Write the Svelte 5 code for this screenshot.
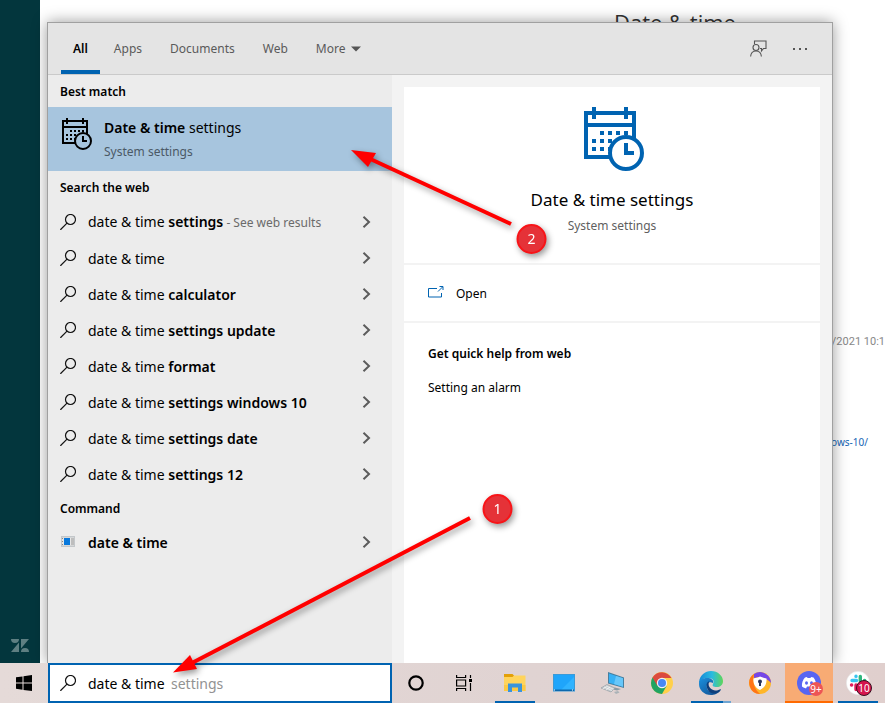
<script>
  const tabs = ['All', 'Apps', 'Documents', 'Web'];
  const results = [
    { bold: 'settings', note: '- See web results' },
    { bold: '' },
    { bold: 'calculator' },
    { bold: 'settings update' },
    { bold: 'format' },
    { bold: 'settings windows 10' },
    { bold: 'settings date' },
    { bold: 'settings 12' }
  ];
  let query = $state('date & time');
</script>

{#snippet calendar(width, height)}
  <svg class="calendar" {width} {height} viewBox="0 0 60 64" fill="none" stroke="currentColor" aria-hidden="true">
    <path d="M2 6H50V50H2ZM2 18H50M10 0V12M42 0V12" stroke-width="4" />
    <path d="M16 26h28M8 34h28M8 42h20" stroke-width="4" stroke-dasharray="4 4" />
    <circle class="face" cx="42" cy="46" r="16" stroke-width="4" />
    <path d="M42 36V46H50" stroke-width="4" />
  </svg>
{/snippet}

{#snippet magnifier()}
  <svg class="lead" width="16" height="16" viewBox="0 0 16 16" fill="none" stroke="#111" stroke-width="1.2" aria-hidden="true">
    <circle cx="10.5" cy="5.5" r="5" /><path d="M7 9.2.4 15.8" />
  </svg>
{/snippet}

{#snippet chevron()}
  <svg class="chevron" width="9" height="12" viewBox="0 0 9 12" fill="none" stroke="#5c5c5c" stroke-width="2" aria-hidden="true">
    <path d="M1.5.8 7 6 1.5 11.2" />
  </svg>
{/snippet}

<div class="screen">
  <div class="desktop">
    <aside>
      <svg width="18" height="13" viewBox="0 0 18 13" fill="#5e7f82" aria-label="Zendesk">
        <path d="M0 0h8a4 4 0 0 1-8 0zM8 3.5V13H0zM10 0h8l-8 9.5zM10 13a4 4 0 0 1 8 0z" />
      </svg>
    </aside>
    <main>
      <h1>Date &amp; time</h1>
      <div class="behind">
        <span>2/2021 10:1</span>
        <a href="#article">ows-10/</a>
      </div>
    </main>

    <section class="panel" aria-label="Search">
      <header>
        <nav>
          {#each tabs as tab, i}
            <button class:active={i === 0}>{tab}</button>
          {/each}
          <button class="more">More
            <svg width="10" height="6" viewBox="0 0 10 6" aria-hidden="true"><path d="M0 .5h10L5 5.5z" fill="#555" /></svg>
          </button>
        </nav>
        <div class="tools">
          <button aria-label="Feedback">
            <svg width="17" height="17" viewBox="0 0 17 17" fill="none" stroke="#555" stroke-width="1.1" aria-hidden="true">
              <path d="M4.5 4V1H16v7.5h-2.5L11.5 11V8.5H10" />
              <circle cx="6" cy="7.5" r="3" />
              <path d="M.6 16.5c.3-3.500 2.500-5.500 5.400-5.500s5.100 2 5.400 5.500" />
            </svg>
          </button>
          <button aria-label="Options">
            <svg width="14" height="2" viewBox="0 0 14 2" fill="#555" aria-hidden="true"><path d="M0 0h2v2H0zM6 0h2v2H6zM12 0h2v2h-2z" /></svg>
          </button>
        </div>
      </header>

      <div class="body">
        <div class="list">
          <h2>Best match</h2>
          <button class="best">
            {@render calendar(30, 32)}
            <span class="names">
              <span class="title"><b>Date &amp; time</b> settings</span>
              <span class="sub">System settings</span>
            </span>
          </button>
          <h2>Search the web</h2>
          {#each results as r}
            <button class="row" class:tall={r.note}>
              {@render magnifier()}
              <span>date &amp; time <b>{r.bold}</b>{#if r.note}<small>{' ' + r.note}</small>{/if}</span>
              {@render chevron()}
            </button>
          {/each}
          <h2>Command</h2>
          <button class="row">
            <svg class="lead" width="16" height="16" viewBox="0 0 16 16" aria-hidden="true">
              <path d="M1 2h14v11H1z" fill="#c3c7ca" /><path d="M2 3.500h12v8H2z" fill="#e6e6e6" />
              <path d="M2 4h1v1H2zM2 7h1v1H2zM2 10h1v1H2z" fill="#888" />
              <path d="M4 4h6v7H4z" fill="#0878dc" /><path d="M11 4h3v7h-3z" fill="#bdbdbd" />
            </svg>
            <span><b>date &amp; time</b></span>
            {@render chevron()}
          </button>
        </div>

        <div class="detail">
          <div class="hero">
            {@render calendar(60, 64)}
            <h3>Date &amp; time settings</h3>
            <p>System settings</p>
          </div>
          <div class="action">
            <button>
              <svg width="16" height="16" viewBox="0 0 16 16" fill="none" stroke="#0063b1" aria-hidden="true">
                <path d="M9 2.500H.5v8.500h13V7M10 5.500 14.500 1M11.500.5H15v3.500" />
              </svg>
              Open
            </button>
          </div>
          <div class="help">
            <h4>Get quick help from web</h4>
            <a href="#alarm">Setting an alarm</a>
          </div>
        </div>
      </div>
    </section>
  </div>

  <footer>
    <button class="start" aria-label="Start">
      <svg width="16" height="16" viewBox="0 0 16 16" aria-hidden="true"><path d="M0 2.300 6.500 1.400V7.600H0zM7.500 1.200 16 0V7.600H7.500zM0 8.500H6.500V14.700L0 13.800zM7.500 8.500H16V16L7.500 14.900z" /></svg>
    </button>
    <label class="search">
      {@render magnifier()}
      <input aria-label="Type here to search" bind:value={query} />
      <span>settings</span>
    </label>
    <button class="app" aria-label="Cortana">
      <svg width="18" height="18" viewBox="0 0 18 18"><circle cx="9" cy="9" r="6.700" fill="none" stroke="#000" stroke-width="2.200" /></svg>
    </button>
    <button class="app" aria-label="Task view">
      <svg width="18" height="16" viewBox="0 0 18 16" fill="none" stroke="#000" stroke-width="1.200">
        <path d="M1.600 0v2.500h9V0M1.600 5h9v6h-9zM1.600 16v-2.500h9V16M15.500 0v3M15.500 8v8" /><path d="M14 4h3v3h-3z" fill="#000" stroke="none" />
      </svg>
    </button>
    <div class="pinned">
      <button class="app open" aria-label="File Explorer">
        <svg width="22" height="20" viewBox="0 0 22 20">
          <path d="M0 2.500h21.500V18H0z" fill="#ffd45c" /><path d="M0 1h8.500l1.500 1.500L8.500 4H0z" fill="#e3a008" />
          <path d="M0 12h21.500v6H0z" fill="#fcc944" /><path d="M4 10.500h14V19h-4v-4.500H8V19H4z" fill="#3a94dd" />
        </svg>
      </button>
      <button class="app" aria-label="Desktop">
        <svg width="22" height="18" viewBox="0 0 22 18"><rect x=".5" y=".5" width="21" height="16.500" fill="#1fa5fb" stroke="#3a9ad8" /><path d="M8 16 21 3V16z" fill="#30b3ff" /><path d="M1 15.500h20v1.500H1z" fill="#0c68ad" /><path d="M1 16h1M19 16h1" stroke="#fff" /></svg>
      </button>
      <button class="app" aria-label="This PC">
        <svg width="24" height="22" viewBox="0 0 24 22">
          <path d="M7 0 23 5.500V16L7 11.500z" fill="#477f9f" /><path d="M8 1.500 22 6.300v8.400L8 10.700z" fill="#37b1f5" /><path d="M15 4 22 6.300v8.400l-9-2.600z" fill="#67c7fa" />
          <path d="M14 15.500 20 17l-4 1.500-4-1z" fill="#899aa4" /><path d="M0 16 6 12.500 14 16 10 20z" fill="#c6ccd0" stroke="#8d979d" stroke-width=".6" /><path d="m3 15 8 3.500M5 14l7.500 3.200M1.500 17 5 15M5 18l4-3" stroke="#f5f5f5" stroke-width=".7" /><path d="m13 20 4-1 1.500 1.500L15 22z" fill="#aab2b7" />
        </svg>
      </button>
      <button class="app" aria-label="Chrome">
        <svg width="22" height="22" viewBox="0 0 22 22">
          <circle cx="11" cy="11" r="11" fill="#ffd04b" /><path d="M11 11 1.500 5.500A11 11 0 0 0 11 22l4.500-8z" fill="#1fa463" />
          <path d="M1.500 5.500A11 11 0 0 1 20.500 6H11L6.500 14z" fill="#db4a3e" /><circle cx="11" cy="11" r="5.200" fill="#f3f3f3" /><circle cx="11" cy="11" r="4" fill="#4688f4" />
        </svg>
      </button>
      <button class="app open edge" aria-label="Edge">
        <svg width="24" height="24" viewBox="0 0 24 24">
          <defs>
            <linearGradient id="edgeTop" x1="0" x2="1"><stop offset="0" stop-color="#1389d7" /><stop offset=".55" stop-color="#2abbe0" /><stop offset="1" stop-color="#5fd657" /></linearGradient>
            <linearGradient id="edgeLow" x1="0" x2="1" y2="1"><stop offset="0" stop-color="#1b90dd" /><stop offset="1" stop-color="#114a8b" /></linearGradient>
          </defs>
          <path d="M0 11C1 4 6 0 12 0c7 0 12 5 12 10 0 4-3 6-6 6-4 0-5-1-4-3 2-4-1-6-5-6-5 0-8 3-9 6z" fill="url(#edgeTop)" />
          <path d="M0 13C0 9 4 7 8 7c4 0 7 2 6 5-4-2-7 1-6 5 1 4 6 6 14 2-3 4-7 5-10 5C5 24 0 19 0 13z" fill="url(#edgeLow)" />
          <path d="M8 17c-1-4 0-6 2.500-7C8 14 11 19 16 19.500c2 .200 4-.500 6-1.500-1 3-5 5-8 4.500-3-.500-5-2.500-6-5.500z" fill="#0d3f7c" />
        </svg>
      </button>
      <button class="app" aria-label="Avast Secure Browser">
        <svg width="22" height="22" viewBox="0 0 22 22">
          <circle cx="11" cy="11" r="11" fill="#ffb629" /><path d="M5 2A11 11 0 0 1 22 11c-4-5-11-7-17-5z" fill="#7547e8" /><path d="M5 2A11 11 0 0 0 11 22C5 17 3 10 5 2z" fill="#ff7417" />
          <path d="M11 4.500c2 1 4 1.500 6.500 2 .5 5-1.500 9-6.500 11.500-5-2.500-7-6.500-6.500-11.500 2.500-.5 4.500-1 6.500-2z" fill="#fff" /><circle cx="11" cy="9.500" r="2" fill="#29355b" /><path d="M10 10h2v4h-2z" fill="#29355b" />
        </svg>
      </button>
      <button class="app open discord" aria-label="Discord">
        <svg width="24" height="24" viewBox="0 0 24 24">
          <circle cx="12" cy="12" r="12" fill="#5865f2" /><path d="M8 6.500 10 6l.500 1h3L14 6l2.500.5c2 2.500 3 6 2.500 9-1.500 1-2.500 1.500-4 2l-1-2h-4l-1 2c-1.500-.5-2.500-1-4-2C4.500 12 6 8.500 8 6.500z" fill="#fff" /><ellipse cx="9.500" cy="12" rx="1.500" ry="1.700" fill="#5865f2" /><ellipse cx="14.500" cy="12" rx="1.500" ry="1.700" fill="#5865f2" />
        </svg>
        <span class="badge">9+</span>
      </button>
      <button class="app open slack" aria-label="Slack">
        <svg width="24" height="24" viewBox="0 0 24 24" fill="none" stroke-width="3.400" stroke-linecap="round">
          <circle cx="12" cy="12" r="11.700" fill="#fff" stroke="#ddd" stroke-width=".5" />
          <path d="M6 9.500h4.500M10 5.200v.2" stroke="#36c5f0" /><path d="M14.300 5.500V10M18.500 9.500h.2" stroke="#2eb67d" /><path d="M10 14v4.500M5.500 14h.2" stroke="#e01e5a" /><path d="M14.300 14H19" stroke="#ecb22e" />
        </svg>
        <span class="badge">10</span>
      </button>
    </div>
  </footer>

  <svg class="notes" width="885" height="703" aria-hidden="true">
    <g fill="red">
      <path d="M470 518 190 664" stroke="red" stroke-width="4" /><path d="M173 672.500 190 655 197 669z" />
      <path d="M511 224 366 157" stroke="red" stroke-width="4" /><path d="M351 150 376 153 368 167z" />
    </g>
    <g fill="#e53238" stroke="#f81418" stroke-width="2">
      <circle cx="497.500" cy="509" r="14" /><circle cx="531.500" cy="239" r="14" />
    </g>
    <text x="497.500" y="514">1</text>
    <text x="531.500" y="244">2</text>
  </svg>
</div>

<style>
  :global(body) { margin: 0; }
  .screen { position: relative; display: grid; grid-template-rows: 1fr 40px; height: 100vh; overflow: hidden; font: 14px/20px "Noto Sans", "Open Sans", sans-serif; color: #000; }
  button { border: 0; margin: 0; padding: 0; background: none; font: inherit; color: inherit; text-align: left; }
  a { text-decoration: none; color: inherit; }
  h1, h2, h3, h4, p { margin: 0; font-weight: 400; }
  b { font-weight: 600; }
  svg { flex: none; display: block; }

  .desktop { position: relative; display: grid; grid-template-columns: 40px 1fr; min-height: 0; background: #fff; }
  aside { display: flex; align-items: flex-end; justify-content: center; padding-bottom: 11px; background: #03363d; }
  main { display: flex; flex-direction: column; overflow: hidden; }
  h1 { padding: 8px 0 0 574px; font-family: "Open Sans", sans-serif; font-size: 22px; line-height: 28px; color: #333; }
  .behind { display: flex; flex-direction: column; align-items: flex-end; gap: 80px; padding-top: 296px; font-size: 11px; color: #888; white-space: nowrap; }
  .behind span { font-family: Roboto, sans-serif; }
  .behind a { padding-right: 17px; font-size: 10px; color: #1565b5; }

  .panel { position: absolute; inset: 22px 52px 0 47px; display: flex; flex-direction: column; border: 1px solid #a0a0a0; border-bottom: 0; background: #f4f4f4; box-shadow: 0 0 14px rgba(0, 0, 0, .4); }
  header { display: flex; justify-content: space-between; height: 51px; border-bottom: 1px solid #cacaca; background: #e4e4e4; font-size: 12px; color: #5a5a5a; }
  nav { display: flex; padding-left: 13px; }
  nav button { padding: 0 14px; }
  nav .active { padding: 4px 12px 0; border-bottom: 4px solid #0063b1; font-weight: 600; color: #000; }
  nav .more { display: flex; align-items: center; gap: 6px; }
  .tools { display: flex; align-items: center; gap: 26px; padding-right: 25px; }
  .body { flex: 1; display: grid; grid-template-columns: 344px 1fr; min-height: 0; }
  .list { background: #ececec; }
  h2 { padding: 2px 0 0 12px; font-size: 12px; line-height: 30px; font-weight: 600; }
  .best { display: flex; gap: 12px; width: 100%; height: 64px; padding: 11px 12px 0 14px; background: #a7c5de; }
  .names { display: flex; flex-direction: column; gap: 4px; }
  .sub { font-size: 12px; color: #4b5966; }
  .row { display: flex; align-items: center; gap: 12px; width: 100%; height: 36px; padding: 0 21px 0 12px; }
  .row.tall { height: 37px; }
  .row span { flex: 1; padding-top: 2px; white-space: nowrap; }
  small { font-size: 12px; color: #6a6a6a; }

  .detail { display: flex; flex-direction: column; gap: 2px; padding: 12px 12px 0; background: #f3f3f3; }
  .hero { display: flex; flex-direction: column; align-items: center; height: 156px; padding-top: 20px; background: #fff; color: #0063b1; }
  .calendar .face { fill: #fff; }
  .hero .calendar { padding-left: 4px; }
  .best .calendar .face { fill: #a7c5de; }
  h3 { margin-top: 16px; font-size: 17px; line-height: 26px; color: #000; }
  .hero p { margin-top: 3px; font-size: 12px; color: #5f5f5f; }
  .action { display: flex; padding: 19px 24px 17px; background: #fff; font-size: 12px; }
  .action button { display: flex; align-items: center; gap: 12px; }
  .help { flex: 1; display: flex; flex-direction: column; align-items: flex-start; gap: 14px; padding: 21px 24px; background: #fff; font-size: 12px; }
  h4 { font-size: 12px; font-weight: 600; }

  footer { position: relative; display: flex; background: linear-gradient(90deg, #e5dad8, #e0d3d2 60%, #e0cfcd); }
  .start { display: grid; place-items: center; width: 48px; }
  .search { display: flex; align-items: center; box-sizing: border-box; width: 344px; padding: 0 10px; border: 2px solid #0063b1; background: #fff; }
  .search input { width: 83px; margin-left: 12px; padding: 2px 0 0; border: 0; outline: 0; background: none; font: inherit; color: #000; }
  .search span { padding-top: 2px; color: #929292; }
  .pinned { display: flex; gap: 1px; padding-left: 3px; }
  .app { position: relative; display: grid; place-items: center; width: 48px; height: 40px; }
  .open::after { content: ""; position: absolute; inset: auto 4px 0; height: 2px; background: #0063b1; }
  .edge::after { background: linear-gradient(90deg, #0063b1 80%, #6fa5d2 80%); }
  .discord { background: #f8ab74; }
  .discord::after { inset: auto 0 0; background: #ff6a00; }
  .badge { position: absolute; right: 10px; bottom: 7px; width: 14px; height: 14px; border-radius: 50%; background: #ed5555; font-size: 10px; line-height: 14px; text-align: center; color: #fff; }
  .slack .badge { box-sizing: border-box; width: 16px; height: 16px; border: 1px solid #3a1020; background: #d5154d; }

  .notes { position: absolute; inset: 0; pointer-events: none; filter: drop-shadow(2px 3px 3px rgba(0, 0, 0, .4)); }
  .notes text { font: 14px "Noto Sans", sans-serif; text-anchor: middle; fill: #fff; }
</style>
